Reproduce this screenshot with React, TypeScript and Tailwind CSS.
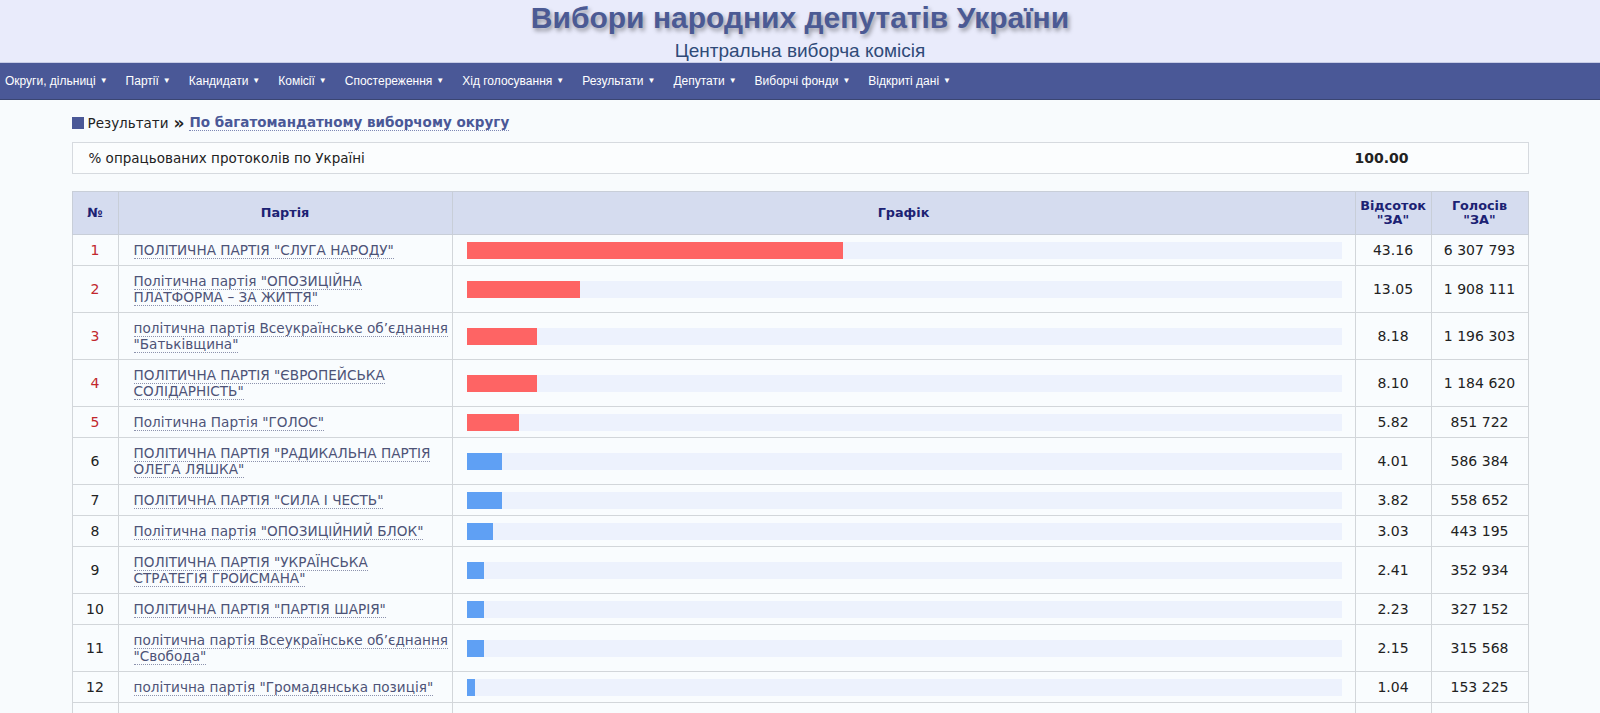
import React from "react";

type Row = {
  name: string;
  pct: number;
  votes: string;
};

// names carry the same line breaks as the original page
const rows: Row[] = [
  { name: 'ПОЛІТИЧНА ПАРТІЯ "СЛУГА НАРОДУ"', pct: 43.16, votes: "6 307 793" },
  { name: 'Політична партія "ОПОЗИЦІЙНА\nПЛАТФОРМА – ЗА ЖИТТЯ"', pct: 13.05, votes: "1 908 111" },
  { name: 'політична партія Всеукраїнське об’єднання\n"Батьківщина"', pct: 8.18, votes: "1 196 303" },
  { name: 'ПОЛІТИЧНА ПАРТІЯ "ЄВРОПЕЙСЬКА\nСОЛІДАРНІСТЬ"', pct: 8.1, votes: "1 184 620" },
  { name: 'Політична Партія "ГОЛОС"', pct: 5.82, votes: "851 722" },
  { name: 'ПОЛІТИЧНА ПАРТІЯ "РАДИКАЛЬНА ПАРТІЯ\nОЛЕГА ЛЯШКА"', pct: 4.01, votes: "586 384" },
  { name: 'ПОЛІТИЧНА ПАРТІЯ "СИЛА І ЧЕСТЬ"', pct: 3.82, votes: "558 652" },
  { name: 'Політична партія "ОПОЗИЦІЙНИЙ БЛОК"', pct: 3.03, votes: "443 195" },
  { name: 'ПОЛІТИЧНА ПАРТІЯ "УКРАЇНСЬКА\nСТРАТЕГІЯ ГРОЙСМАНА"', pct: 2.41, votes: "352 934" },
  { name: 'ПОЛІТИЧНА ПАРТІЯ "ПАРТІЯ ШАРІЯ"', pct: 2.23, votes: "327 152" },
  { name: 'політична партія Всеукраїнське об’єднання\n"Свобода"', pct: 2.15, votes: "315 568" },
  { name: 'політична партія "Громадянська позиція"', pct: 1.04, votes: "153 225" },
  { name: 'ПОЛІТИЧНА ПАРТІЯ "ПАРТІЯ ЗЕЛЕНИХ\nУКРАЇНИ"', pct: 0.66, votes: "96 233" },
  { name: 'Політична партія "Об’єднання\n"Самопоміч"', pct: 0.62, votes: "91 700" },
];

const menu = [
  "Округи, дільниці",
  "Партії",
  "Кандидати",
  "Комісії",
  "Спостереження",
  "Хід голосування",
  "Результати",
  "Депутати",
  "Виборчі фонди",
  "Відкриті дані",
];

export default function App() {
  return (
    <div className="min-h-screen bg-[#f8fbfd] font-['DejaVu_Sans',Verdana,sans-serif] text-[13.5px] text-[#222]">
      {/* header */}
      <div className="bg-[#e9ebfb] border-b border-[#c7cce6] h-[63px] flex flex-col items-center font-['Liberation_Sans',Arial,sans-serif]">
        <h1 className="mt-[1px] text-[30px] leading-[34px] font-bold text-[#4b5a94] [text-shadow:2px_3px_4px_rgba(0,0,0,0.35)]">
          Вибори народних депутатів України
        </h1>
        <div className="mt-[6px] text-[19px] leading-[20px] text-[#2f4a78]">Центральна виборча комісія</div>
      </div>

      {/* nav */}
      <div className="bg-[#4a5897] h-[37px] border-b border-[#3a4572] flex items-center pl-[5px] gap-[18px] font-['Liberation_Sans',Arial,sans-serif] text-[12px] text-white">
        {menu.map((m) => (
          <div key={m} className="flex items-center gap-[4px]">
            <span>{m}</span>
            <span className="text-[8px]">▼</span>
          </div>
        ))}
      </div>

      <div className="w-[1457px] mx-auto">
        {/* breadcrumb */}
        <div className="mt-[14px] flex items-center h-[18px]">
          <span className="inline-block w-[12px] h-[12px] bg-[#4a5897] mr-[4px]" />
          <span>Результати</span>
          <span className="mx-[5px] font-bold text-[17px] leading-none">»</span>
          <span className="font-bold text-[#4a5897] border-b border-dotted border-[#7d87b5] leading-[15px]">
            По багатомандатному виборчому округу
          </span>
        </div>

        {/* processed box */}
        <div className="mt-[10px] h-[32px] border border-[#d6dadf] bg-[#fbfdfe] flex items-center pl-[16px] pr-[119px]">
          <span className="flex-1">% опрацьованих протоколів по Україні</span>
          <span className="font-bold text-[14px]">100.00</span>
        </div>

        {/* results table */}
        <table className="mt-[17px] w-full table-fixed border-collapse">
          <thead>
            <tr className="bg-[#d5dcef] text-[12.8px] font-bold text-[#1c2273] h-[43px]">
              <th className="w-[46px] border border-[#c8ced8]">№</th>
              <th className="w-[334px] border border-[#c8ced8]">Партія</th>
              <th className="border border-[#c8ced8]">Графік</th>
              <th className="w-[76px] border border-[#c8ced8] leading-[14px]">
                Відсоток
                <br />
                "ЗА"
              </th>
              <th className="w-[97px] border border-[#c8ced8] leading-[14px]">
                Голосів
                <br />
                "ЗА"
              </th>
            </tr>
          </thead>
          <tbody className="text-[13.6px]">
            {rows.map((r, i) => (
              <tr key={i} className="bg-[#f9fcfe]">
                <td
                  className={
                    "border border-[#d2d6da] text-center text-[14px] py-[7px] leading-[16px] " +
                    (i < 5 ? "text-[#c1272d]" : "text-[#222]")
                  }
                >
                  {i + 1}
                </td>
                <td className="border border-[#d2d6da] pl-[15px] pr-[4px] py-[7px] leading-[16px] whitespace-pre">
                  {r.name.split("\n").map((line, k) => (
                    <div key={k}>
                      <span className="text-[#4d5377] border-b border-dotted border-[#8c92ad]">{line}</span>
                    </div>
                  ))}
                </td>
                <td className="border border-[#d2d6da] pl-[14px] pr-[13px]">
                  <div className="h-[17px] bg-[#edf2fd]">
                    <div
                      className={"h-full " + (i < 5 ? "bg-[#fe6464]" : "bg-[#5fa0f4]")}
                      style={{ width: `${Math.round(r.pct)}%` }}
                    />
                  </div>
                </td>
                <td className="border border-[#d2d6da] text-center text-[14px]">{r.pct.toFixed(2)}</td>
                <td className="border border-[#d2d6da] text-center text-[14px]">{r.votes}</td>
              </tr>
            ))}
          </tbody>
        </table>
        <div className="h-[30px]" />
      </div>
    </div>
  );
}
